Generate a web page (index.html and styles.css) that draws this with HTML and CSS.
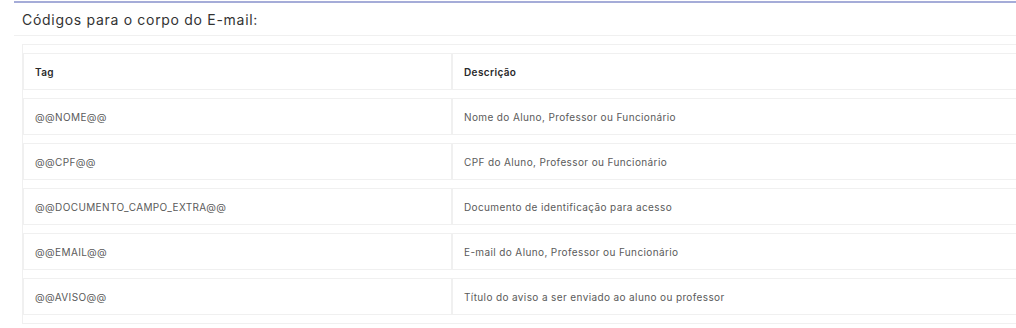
FILE: index.html
```html
<!DOCTYPE html>
<html lang="pt-BR">
<head>
<meta charset="utf-8">
<title>Códigos</title>
<link rel="stylesheet" href="styles.css">
</head>
<body>
<div class="panel">
  <div class="panel-head">Códigos para o corpo do E-mail:</div>
  <div class="panel-body">
    <table class="codes">
      <thead>
        <tr><th class="col-tag">Tag</th><th>Descrição</th></tr>
      </thead>
      <tbody>
        <tr><td>@@NOME@@</td><td>Nome do Aluno, Professor ou Funcionário</td></tr>
        <tr><td>@@CPF@@</td><td>CPF do Aluno, Professor ou Funcionário</td></tr>
        <tr><td>@@DOCUMENTO_CAMPO_EXTRA@@</td><td>Documento de identificação para acesso</td></tr>
        <tr><td>@@EMAIL@@</td><td>E-mail do Aluno, Professor ou Funcionário</td></tr>
        <tr><td>@@AVISO@@</td><td>Título do aviso a ser enviado ao aluno ou professor</td></tr>
      </tbody>
    </table>
  </div>
</div>
</body>
</html>
```
FILE: styles.css
```css
html, body {
  margin: 0;
  padding: 0;
  background: #fff;
  overflow: hidden;
}
body {
  font-family: "Inter", "Open Sans", sans-serif;
  width: 1016px;
  height: 328px;
}
.panel {
  margin: 1px 0 0 14px;
  width: 1100px;
  border-top: 2px solid #a5acd8;
}
.panel-head {
  height: 33px;
  box-sizing: border-box;
  padding: 0 0 0 8px;
  display: flex;
  align-items: center;
  font-size: 14px;
  letter-spacing: 0.7px;
  color: #333;
  border-bottom: 1px solid #f0f0f0;
}
.panel-body {
  padding: 8px 0 0 8px;
}
.codes {
  width: 1060px;
  border: 1px solid #f0f0f0;
  border-collapse: separate;
  border-spacing: 0 8px;
  font-size: 10px;
  letter-spacing: 0.38px;
}
.codes th, .codes td {
  border: 1px solid #f0f0f0;
  height: 37px;
  box-sizing: border-box;
  padding: 0 11px;
  text-align: left;
  vertical-align: middle;
}
.codes th {
  font-weight: 600;
  color: #2a2a2a;
}
.codes td {
  color: #5a5a5a;
}
.codes .col-tag {
  width: 429px;
}
```
